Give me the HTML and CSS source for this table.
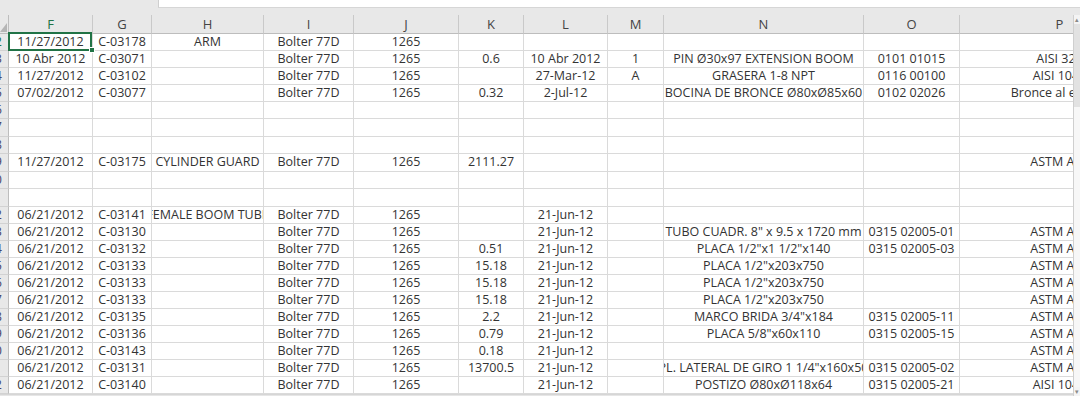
FILE: index.html
```html
<!DOCTYPE html>
<html lang="es">
<head>
<meta charset="utf-8">
<title>Hoja de cálculo</title>
<link rel="stylesheet" href="styles.css">
</head>
<body>
<div class="topbar"><div class="fbox"></div></div>
<div class="app">
  <div class="sheet">
    <div class="row hdr">
      <div class="c corner"><svg width="8" height="12" viewBox="0 0 8 12"><polygon points="7,2 7,11 0,11" fill="#b5b5b5"/></svg></div>
      <div class="c hsel">F</div><div class="c">G</div><div class="c">H</div><div class="c">I</div><div class="c">J</div><div class="c">K</div><div class="c">L</div><div class="c">M</div><div class="c">N</div><div class="c">O</div><div class="c">P</div>
    </div>

    <div class="row">
      <div class="c rn rsel"><span>2</span></div>
      <div class="c sel">11/27/2012</div><div class="c">C-03178</div><div class="c">ARM</div><div class="c">Bolter 77D</div><div class="c">1265</div><div class="c"></div><div class="c"></div><div class="c"></div><div class="c"></div><div class="c"></div><div class="c"></div>
    </div>
    <div class="row">
      <div class="c rn"><span>3</span></div>
      <div class="c">10 Abr 2012</div><div class="c">C-03071</div><div class="c"></div><div class="c">Bolter 77D</div><div class="c">1265</div><div class="c">0.6</div><div class="c">10 Abr 2012</div><div class="c">1</div><div class="c">PIN Ø30x97 EXTENSION BOOM</div><div class="c">0101 01015</div><div class="c">AISI 321</div>
    </div>
    <div class="row">
      <div class="c rn"><span>4</span></div>
      <div class="c">11/27/2012</div><div class="c">C-03102</div><div class="c"></div><div class="c">Bolter 77D</div><div class="c">1265</div><div class="c"></div><div class="c">27-Mar-12</div><div class="c">A</div><div class="c">GRASERA 1-8 NPT</div><div class="c">0116 00100</div><div class="c">AISI 1045</div>
    </div>
    <div class="row">
      <div class="c rn"><span>5</span></div>
      <div class="c">07/02/2012</div><div class="c">C-03077</div><div class="c"></div><div class="c">Bolter 77D</div><div class="c">1265</div><div class="c">0.32</div><div class="c">2-Jul-12</div><div class="c"></div><div class="c">BOCINA DE BRONCE Ø80xØ85x60</div><div class="c">0102 02026</div><div class="c">Bronce al estaño</div>
    </div>
    <div class="row">
      <div class="c rn"><span>6</span></div>
      <div class="c"></div><div class="c"></div><div class="c"></div><div class="c"></div><div class="c"></div><div class="c"></div><div class="c"></div><div class="c"></div><div class="c"></div><div class="c"></div><div class="c"></div>
    </div>
    <div class="row tall">
      <div class="c rn"><span>7</span></div>
      <div class="c"></div><div class="c"></div><div class="c"></div><div class="c"></div><div class="c"></div><div class="c"></div><div class="c"></div><div class="c"></div><div class="c"></div><div class="c"></div><div class="c"></div>
    </div>
    <div class="row">
      <div class="c rn"><span>8</span></div>
      <div class="c"></div><div class="c"></div><div class="c"></div><div class="c"></div><div class="c"></div><div class="c"></div><div class="c"></div><div class="c"></div><div class="c"></div><div class="c"></div><div class="c"></div>
    </div>
    <div class="row tall">
      <div class="c rn"><span>9</span></div>
      <div class="c">11/27/2012</div><div class="c">C-03175</div><div class="c">CYLINDER GUARD</div><div class="c">Bolter 77D</div><div class="c">1265</div><div class="c">2111.27</div><div class="c"></div><div class="c"></div><div class="c"></div><div class="c"></div><div class="c">ASTM A36</div>
    </div>
    <div class="row">
      <div class="c rn"><span>10</span></div>
      <div class="c"></div><div class="c"></div><div class="c"></div><div class="c"></div><div class="c"></div><div class="c"></div><div class="c"></div><div class="c"></div><div class="c"></div><div class="c"></div><div class="c"></div>
    </div>
    <div class="row tall">
      <div class="c rn"><span>11</span></div>
      <div class="c"></div><div class="c"></div><div class="c"></div><div class="c"></div><div class="c"></div><div class="c"></div><div class="c"></div><div class="c"></div><div class="c"></div><div class="c"></div><div class="c"></div>
    </div>
    <div class="row">
      <div class="c rn"><span>12</span></div>
      <div class="c">06/21/2012</div><div class="c">C-03141</div><div class="c">FEMALE BOOM TUBE</div><div class="c">Bolter 77D</div><div class="c">1265</div><div class="c"></div><div class="c">21-Jun-12</div><div class="c"></div><div class="c"></div><div class="c"></div><div class="c"></div>
    </div>
    <div class="row">
      <div class="c rn"><span>13</span></div>
      <div class="c">06/21/2012</div><div class="c">C-03130</div><div class="c"></div><div class="c">Bolter 77D</div><div class="c">1265</div><div class="c"></div><div class="c">21-Jun-12</div><div class="c"></div><div class="c">TUBO CUADR. 8" x 9.5 x 1720 mm</div><div class="c">0315 02005-01</div><div class="c">ASTM A36</div>
    </div>
    <div class="row">
      <div class="c rn"><span>14</span></div>
      <div class="c">06/21/2012</div><div class="c">C-03132</div><div class="c"></div><div class="c">Bolter 77D</div><div class="c">1265</div><div class="c">0.51</div><div class="c">21-Jun-12</div><div class="c"></div><div class="c">PLACA 1/2"x1 1/2"x140</div><div class="c">0315 02005-03</div><div class="c">ASTM A36</div>
    </div>
    <div class="row">
      <div class="c rn"><span>15</span></div>
      <div class="c">06/21/2012</div><div class="c">C-03133</div><div class="c"></div><div class="c">Bolter 77D</div><div class="c">1265</div><div class="c">15.18</div><div class="c">21-Jun-12</div><div class="c"></div><div class="c">PLACA 1/2"x203x750</div><div class="c"></div><div class="c">ASTM A36</div>
    </div>
    <div class="row">
      <div class="c rn"><span>16</span></div>
      <div class="c">06/21/2012</div><div class="c">C-03133</div><div class="c"></div><div class="c">Bolter 77D</div><div class="c">1265</div><div class="c">15.18</div><div class="c">21-Jun-12</div><div class="c"></div><div class="c">PLACA 1/2"x203x750</div><div class="c"></div><div class="c">ASTM A36</div>
    </div>
    <div class="row">
      <div class="c rn"><span>17</span></div>
      <div class="c">06/21/2012</div><div class="c">C-03133</div><div class="c"></div><div class="c">Bolter 77D</div><div class="c">1265</div><div class="c">15.18</div><div class="c">21-Jun-12</div><div class="c"></div><div class="c">PLACA 1/2"x203x750</div><div class="c"></div><div class="c">ASTM A36</div>
    </div>
    <div class="row">
      <div class="c rn"><span>18</span></div>
      <div class="c">06/21/2012</div><div class="c">C-03135</div><div class="c"></div><div class="c">Bolter 77D</div><div class="c">1265</div><div class="c">2.2</div><div class="c">21-Jun-12</div><div class="c"></div><div class="c">MARCO BRIDA 3/4"x184</div><div class="c">0315 02005-11</div><div class="c">ASTM A36</div>
    </div>
    <div class="row">
      <div class="c rn"><span>19</span></div>
      <div class="c">06/21/2012</div><div class="c">C-03136</div><div class="c"></div><div class="c">Bolter 77D</div><div class="c">1265</div><div class="c">0.79</div><div class="c">21-Jun-12</div><div class="c"></div><div class="c">PLACA 5/8"x60x110</div><div class="c">0315 02005-15</div><div class="c">ASTM A36</div>
    </div>
    <div class="row">
      <div class="c rn"><span>20</span></div>
      <div class="c">06/21/2012</div><div class="c">C-03143</div><div class="c"></div><div class="c">Bolter 77D</div><div class="c">1265</div><div class="c">0.18</div><div class="c">21-Jun-12</div><div class="c"></div><div class="c"></div><div class="c"></div><div class="c">ASTM A36</div>
    </div>
    <div class="row">
      <div class="c rn"><span>21</span></div>
      <div class="c">06/21/2012</div><div class="c">C-03131</div><div class="c"></div><div class="c">Bolter 77D</div><div class="c">1265</div><div class="c">13700.5</div><div class="c">21-Jun-12</div><div class="c"></div><div class="c">PL. LATERAL DE GIRO 1 1/4"x160x50</div><div class="c">0315 02005-02</div><div class="c">ASTM A36</div>
    </div>
    <div class="row">
      <div class="c rn"><span>22</span></div>
      <div class="c">06/21/2012</div><div class="c">C-03140</div><div class="c"></div><div class="c">Bolter 77D</div><div class="c">1265</div><div class="c"></div><div class="c">21-Jun-12</div><div class="c"></div><div class="c">POSTIZO Ø80xØ118x64</div><div class="c">0315 02005-21</div><div class="c">AISI 1045</div>
    </div>
    <div class="hband"></div>
  </div>
  <div class="vscroll">
    <div class="arrow up">▴</div>
    <div class="thumb"></div>
    <div class="track"></div>
    <div class="arrow dn">▾</div>
  </div>
</div>
</body>
</html>
```
FILE: styles.css
```css
html, body {
  margin: 0;
  padding: 0;
  background: #ffffff;
  overflow: hidden;
}
body {
  width: 1080px;
  height: 396px;
  font-family: "Open Sans", "Noto Sans", sans-serif;
  font-size: 12.5px;
  color: #333333;
}
.topbar {
  height: 15px;
  background: #e8e8e8;
}
.fbox {
  margin-left: 158px;
  height: 7px;
  background: #ffffff;
  border-left: 1px solid #cfcfcf;
  border-bottom: 1px solid #d6d6d6;
}
.app {
  display: flex;
  height: 381px;
}
.sheet {
  width: 1073px;
  overflow: hidden;
  display: flex;
  flex-direction: column;
}
.row {
  display: grid;
  grid-template-columns: 9px 84px 59px 112px 90px 105px 65px 84px 56px 200px 96px 200px;
  height: 17px;
  flex: none;
}
.row.tall {
  height: 18px;
}
.c {
  box-sizing: border-box;
  display: flex;
  align-items: center;
  justify-content: center;
  overflow: hidden;
  white-space: nowrap;
  line-height: 1;
  border-right: 1px solid #dadada;
  border-bottom: 1px solid #dadada;
}
.hdr {
  height: 19px;
  background: #e8e8e8;
}
.hdr .c {
  border-right-color: #c9c9c9;
  border-bottom-color: #bdbdbd;
  color: #444444;
  font-size: 13px;
}
.hdr .corner {
  align-items: flex-end;
  justify-content: flex-start;
  border-right-color: #bdbdbd;
}
.corner svg {
  display: block;
}
.hdr .hsel {
  color: #217346;
}
.rn {
  background: #e8e8e8;
  border-right-color: #bdbdbd;
  border-bottom-color: #d2d2d2;
  justify-content: flex-end;
  padding-right: 6px;
  color: #44446a;
  font-size: 12.5px;
}
.rn.rsel {
  color: #217346;
}
.sel {
  position: relative;
  overflow: visible;
}
.sel::after {
  content: "";
  position: absolute;
  left: -1px;
  top: -2px;
  right: 0;
  bottom: -1px;
  border: 2px solid #217346;
  z-index: 2;
}
.sel::before {
  content: "";
  position: absolute;
  right: -3px;
  bottom: -3px;
  width: 4px;
  height: 4px;
  background: #217346;
  border: 1px solid #ffffff;
  z-index: 3;
}
.hband {
  flex: 1;
  background: #e6e6e6;
  border-top: 1px solid #d6d6d6;
}
.vscroll {
  width: 7px;
  box-sizing: border-box;
  border-left: 1px solid #cfcfcf;
  background: #f4f4f4;
  display: flex;
  flex-direction: column;
}
.arrow {
  height: 9px;
  font-size: 7px;
  line-height: 9px;
  text-align: center;
  color: #8a8a8a;
  flex: none;
  overflow: hidden;
}
.thumb {
  height: 83px;
  background: #e2e2e2;
  flex: none;
}
.track {
  flex: 1;
  background: #f7f7f7;
}
```
